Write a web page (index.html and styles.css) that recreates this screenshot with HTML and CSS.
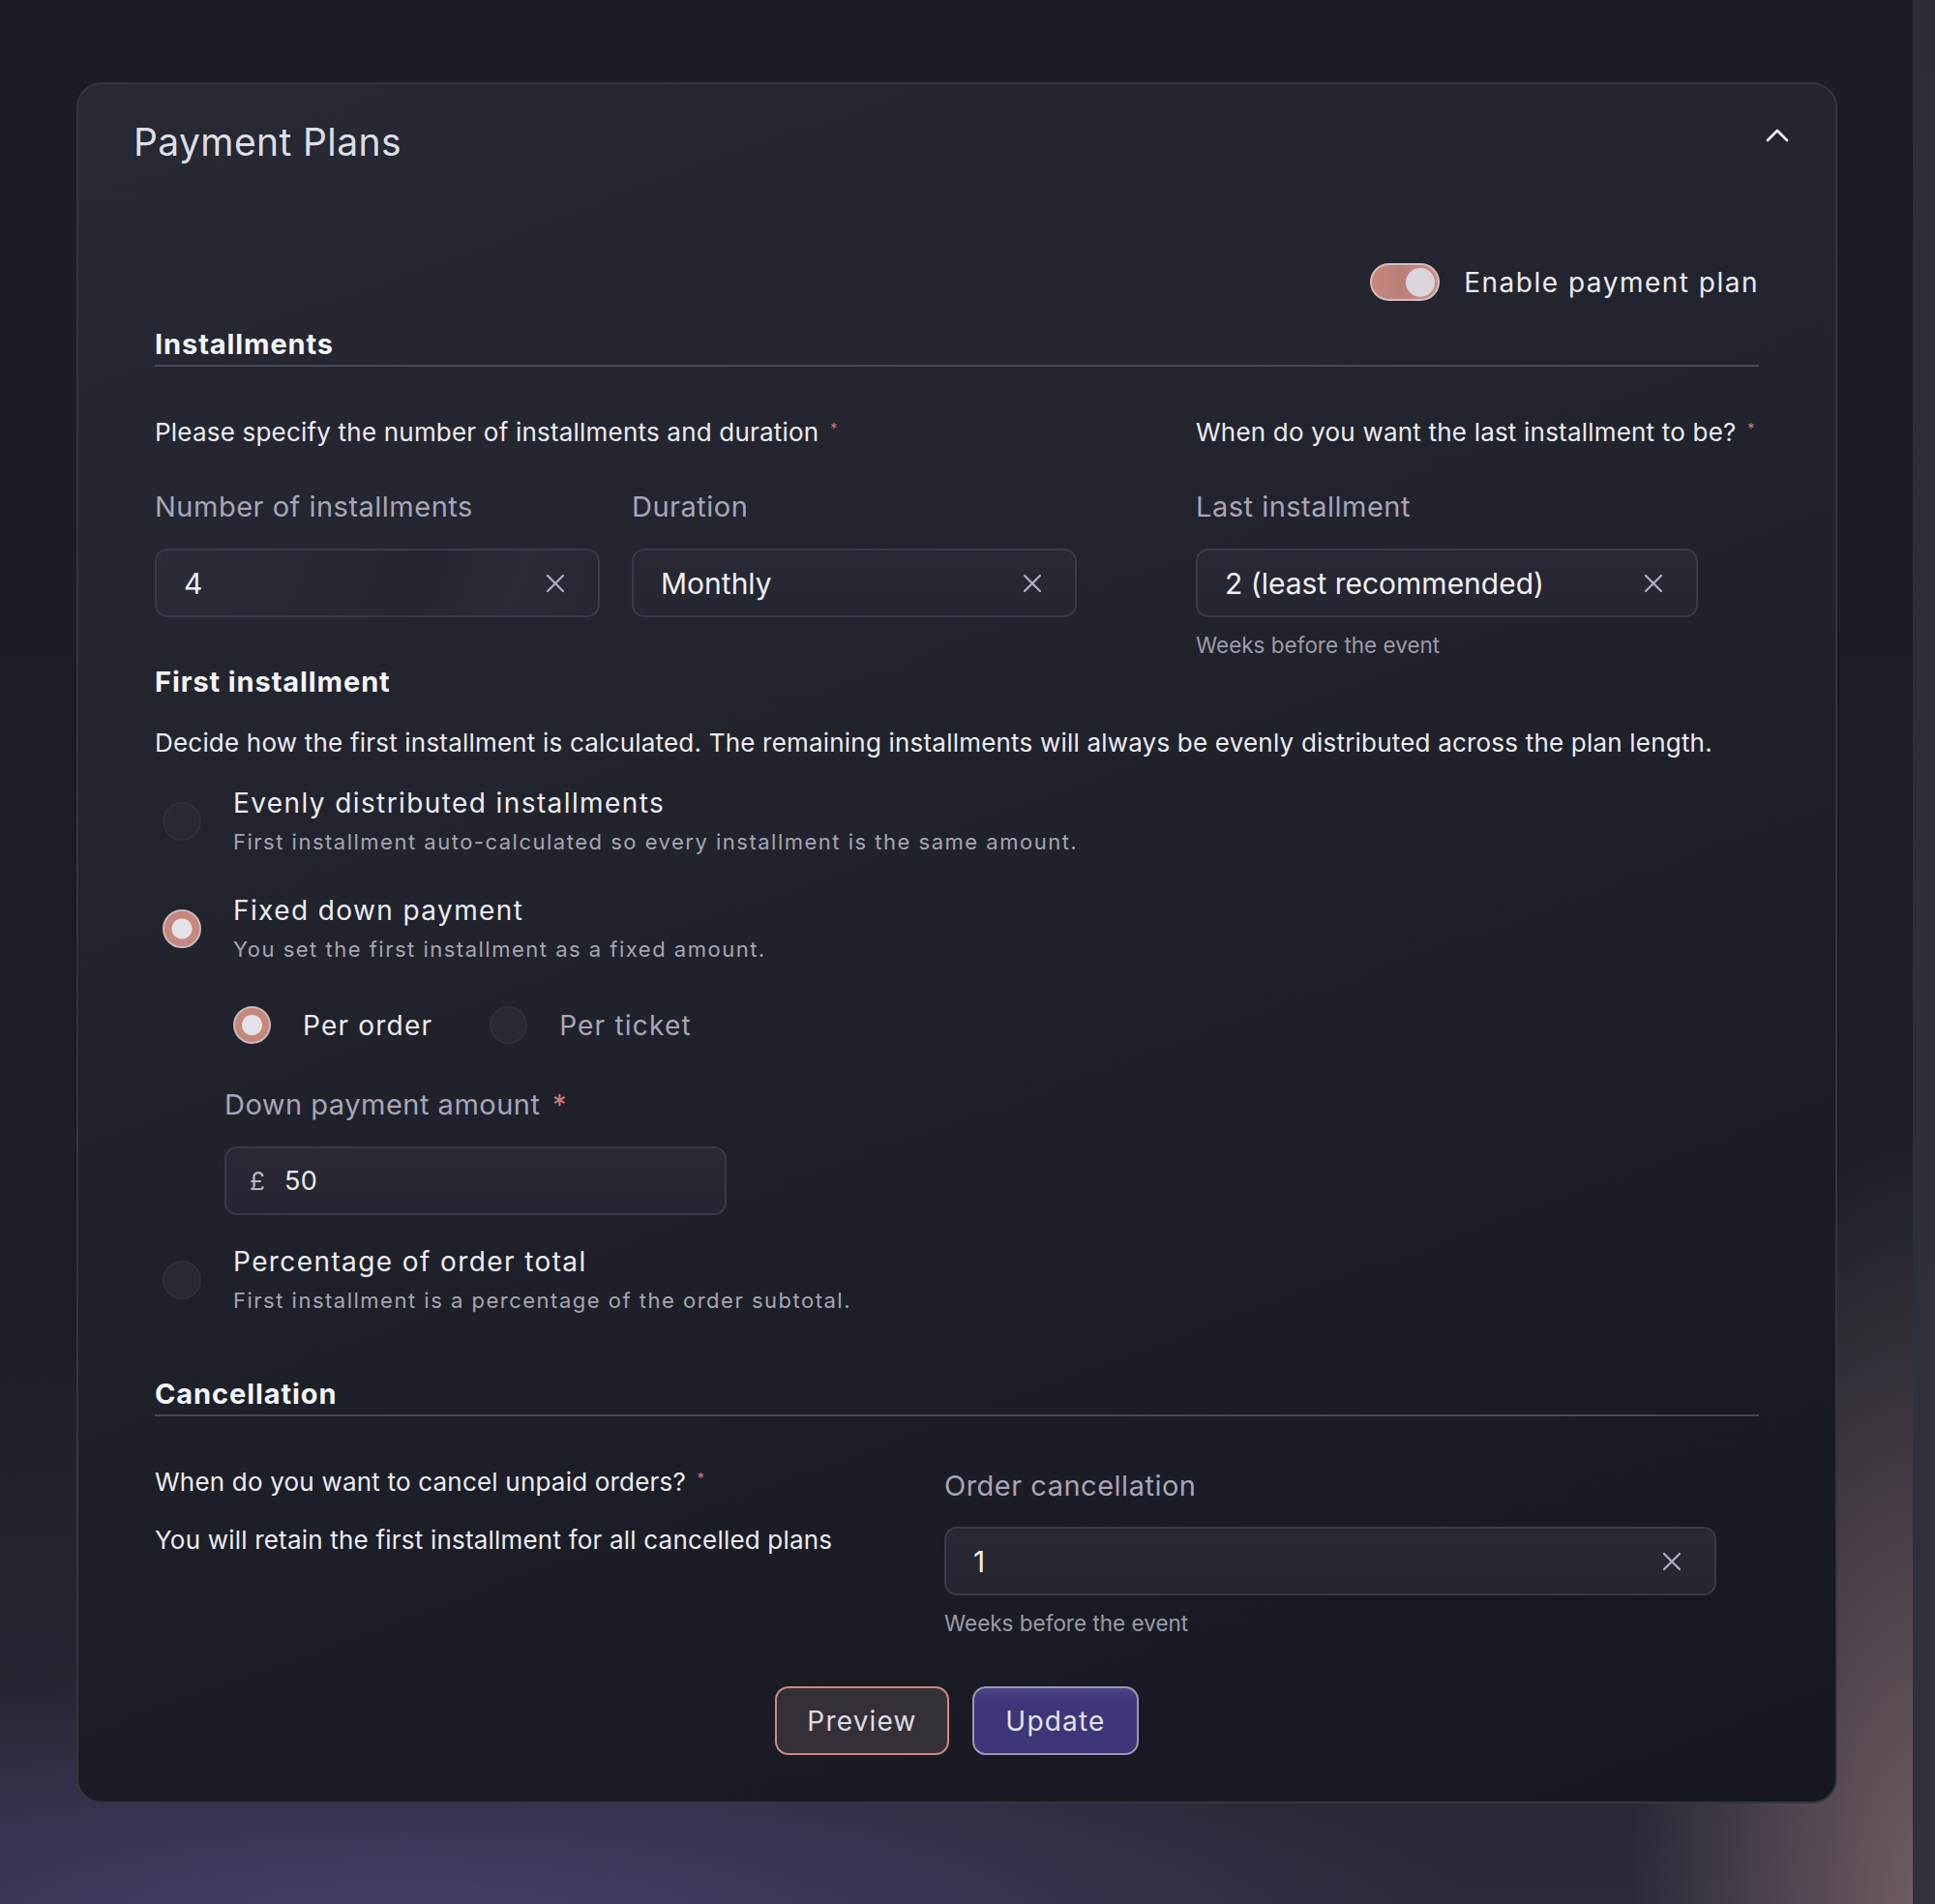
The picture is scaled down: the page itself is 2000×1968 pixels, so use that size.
FILE: index.html
```html
<!DOCTYPE html>
<html lang="en">
<head>
<meta charset="utf-8">
<title>Payment Plans</title>
<link rel="stylesheet" href="styles.css">
</head>
<body>
<div class="page">
  <main class="main">
    <section class="card">
      <header class="card-header">
        <h1 class="title">Payment Plans</h1>
        <button class="chevron" aria-label="Collapse">
          <svg width="24" height="14" viewBox="0 0 24 14"><polyline points="2,12 12,2 22,12" fill="none" stroke="#f2f2f5" stroke-width="2.6" stroke-linecap="round" stroke-linejoin="round"/></svg>
        </button>
      </header>

      <div class="card-body">
        <div class="toggle-row">
          <span class="toggle"><span class="knob"></span></span>
          <span class="toggle-label">Enable payment plan</span>
        </div>

        <h2 class="section-title">Installments</h2>

        <div class="inst-grid">
          <div class="inst-left">
            <p class="question q-first">Please specify the number of installments and duration <sup class="req">*</sup></p>
            <div class="field-pair">
              <div class="field">
                <label class="label">Number of installments</label>
                <div class="input input-textured"><span class="value">4</span><span class="clear"><svg width="20" height="20" viewBox="0 0 20 20"><path d="M2 2 L18 18 M18 2 L2 18" stroke="#b4b0c3" stroke-width="2.2" stroke-linecap="round"/></svg></span></div>
              </div>
              <div class="field">
                <label class="label">Duration</label>
                <div class="input"><span class="value">Monthly</span><span class="clear"><svg width="20" height="20" viewBox="0 0 20 20"><path d="M2 2 L18 18 M18 2 L2 18" stroke="#b4b0c3" stroke-width="2.2" stroke-linecap="round"/></svg></span></div>
              </div>
            </div>
          </div>
          <div class="inst-right">
            <p class="question q-first">When do you want the last installment to be? <sup class="req">*</sup></p>
            <div class="field">
              <label class="label">Last installment</label>
              <div class="input input-last"><span class="value">2 (least recommended)</span><span class="clear"><svg width="20" height="20" viewBox="0 0 20 20"><path d="M2 2 L18 18 M18 2 L2 18" stroke="#b4b0c3" stroke-width="2.2" stroke-linecap="round"/></svg></span></div>
              <p class="hint">Weeks before the event</p>
            </div>
          </div>
        </div>

        <h3 class="sub-title">First installment</h3>
        <p class="desc">Decide how the first installment is calculated. The remaining installments will always be evenly distributed across the plan length.</p>

        <div class="radio-option opt-first">
          <span class="radio"></span>
          <div class="radio-text">
            <div class="radio-label">Evenly distributed installments</div>
            <div class="radio-sub">First installment auto-calculated so every installment is the same amount.</div>
          </div>
        </div>

        <div class="radio-option opt-second">
          <span class="radio radio-on"></span>
          <div class="radio-text">
            <div class="radio-label">Fixed down payment</div>
            <div class="radio-sub">You set the first installment as a fixed amount.</div>
          </div>
        </div>

        <div class="nested">
          <div class="inline-radios">
            <div class="inline-radio">
              <span class="radio radio-sm radio-on"></span>
              <span class="inline-label">Per order</span>
            </div>
            <div class="inline-radio">
              <span class="radio radio-sm"></span>
              <span class="inline-label muted">Per ticket</span>
            </div>
          </div>
          <label class="label label-down">Down payment amount <span class="req-big">*</span></label>
          <div class="input input-amount"><span class="currency">£</span><span class="amount">50</span></div>
        </div>

        <div class="radio-option opt-third">
          <span class="radio"></span>
          <div class="radio-text">
            <div class="radio-label">Percentage of order total</div>
            <div class="radio-sub">First installment is a percentage of the order subtotal.</div>
          </div>
        </div>

        <h2 class="section-title section-cancel">Cancellation</h2>

        <div class="cancel-grid">
          <div class="cancel-left">
            <p class="question q-cancel">When do you want to cancel unpaid orders? <sup class="req">*</sup></p>
            <p class="question q-retain">You will retain the first installment for all cancelled plans</p>
          </div>
          <div class="cancel-right">
            <label class="label label-cancel">Order cancellation</label>
            <div class="input input-cancel"><span class="value">1</span><span class="clear"><svg width="20" height="20" viewBox="0 0 20 20"><path d="M2 2 L18 18 M18 2 L2 18" stroke="#b4b0c3" stroke-width="2.2" stroke-linecap="round"/></svg></span></div>
            <p class="hint">Weeks before the event</p>
          </div>
        </div>

        <div class="actions">
          <button class="btn btn-preview">Preview</button>
          <button class="btn btn-update">Update</button>
        </div>
      </div>
    </section>
  </main>
  <div class="scrollbar"></div>
</div>
</body>
</html>
```

FILE: styles.css
```css
* { box-sizing: border-box; }

html, body {
  margin: 0;
  padding: 0;
}

body {
  width: 2000px;
  height: 1968px;
  overflow: hidden;
  font-family: Inter, "Liberation Sans", Arial, sans-serif;
  color: #ececf0;
  background:
    radial-gradient(ellipse 300px 800px at 1985px 1968px, rgba(160, 124, 128, 0.6), rgba(160, 124, 128, 0) 100%),
    radial-gradient(ellipse 1100px 260px at 420px 1990px, rgba(78, 70, 120, 0.75), rgba(78, 70, 120, 0) 100%),
    linear-gradient(180deg, #1b1d25 0%, #1d1f28 70%, #2a2b3a 100%);
}

.page {
  display: flex;
  height: 1968px;
}

.main {
  flex: 1;
  padding: 85px 0 0 79px;
}

.scrollbar {
  width: 23px;
  background: linear-gradient(180deg, #2c2e36 0%, #30323b 100%);
}

.card {
  width: 1820px;
  height: 1779px;
  border: 2px solid #34363f;
  border-radius: 26px;
  background: linear-gradient(160deg, #272934 0%, #20222c 45%, #161821 100%);
}

.card-header {
  display: flex;
  justify-content: space-between;
  align-items: flex-start;
  padding: 37px 48px 0 57px;
}

.title {
  margin: 0;
  font-size: 39px;
  line-height: 46px;
  font-weight: 400;
  letter-spacing: 0.4px;
  color: #dedee4;
}

.chevron {
  border: 0;
  background: none;
  padding: 0;
  margin-top: 9px;
  width: 24px;
  height: 14px;
  display: block;
}
.chevron svg { display: block; }

.card-body {
  padding: 0 79px;
}

.toggle-row {
  margin-top: 102px;
  display: flex;
  justify-content: flex-end;
  align-items: center;
  gap: 25px;
  height: 39px;
}

.toggle {
  width: 72px;
  height: 39px;
  border-radius: 20px;
  border: 2px solid #d4bfc0;
  background: linear-gradient(90deg, #c6877e 0%, #b98078 45%, #cf8e84 100%);
  display: flex;
  justify-content: flex-end;
  align-items: center;
  padding: 0 3px;
}
.knob {
  width: 30px;
  height: 30px;
  border-radius: 50%;
  background: #d9d7dd;
}

.toggle-label {
  font-size: 28px;
  line-height: 34px;
  letter-spacing: 1.5px;
  color: #ececf0;
}

.section-title {
  margin: 29px 0 0;
  padding-bottom: 5px;
  font-size: 29px;
  line-height: 32px;
  font-weight: 700;
  letter-spacing: 0.9px;
  color: #f4f4f6;
  border-bottom: 2px solid #4a4a55;
}

.section-cancel {
  margin-top: 67px;
}

.inst-grid {
  display: grid;
  grid-template-columns: 955px 1fr;
  column-gap: 121px;
}

.question {
  margin: 51px 0 0;
  font-size: 26px;
  line-height: 30px;
  letter-spacing: 0.2px;
  color: #ececf0;
}

.q-first {
  margin-top: 53px;
}

.req {
  color: #c57a6c;
  font-size: 15px;
  vertical-align: top;
  position: relative;
  top: -4px;
  margin-left: 4px;
}

.field-pair {
  display: grid;
  grid-template-columns: 460px 460px;
  column-gap: 33px;
}

.label {
  display: block;
  margin-top: 45px;
  margin-bottom: 26px;
  font-size: 29px;
  line-height: 34px;
  letter-spacing: 0.5px;
  color: #a9a5b8;
}

.input {
  height: 71px;
  border: 2px solid #393a4b;
  border-radius: 13px;
  background: linear-gradient(180deg, #282935 0%, #252632 100%);
  display: flex;
  align-items: center;
  justify-content: space-between;
  padding: 0 34px 0 28px;
}

.input-textured {
  background: linear-gradient(110deg, #2a2b37 0%, #262633 60%, #2b2b38 80%, #262732 100%);
}

.input-last {
  width: 519px;
}

.value {
  font-size: 30px;
  line-height: 36px;
  color: #f0f0f3;
}

.clear {
  display: flex;
  width: 20px;
  height: 20px;
}

.hint {
  margin: 15px 0 0;
  font-size: 22.5px;
  line-height: 28px;
  color: #9d9ba7;
}

.sub-title {
  margin: 8px 0 0;
  font-size: 29px;
  line-height: 32px;
  font-weight: 700;
  letter-spacing: 0.9px;
  color: #f4f4f6;
}

.desc {
  margin: 32px 0 0;
  font-size: 26px;
  line-height: 30px;
  letter-spacing: 0.2px;
  color: #ececf0;
}

.radio-option {
  display: flex;
  align-items: center;
  gap: 33px;
  padding-left: 8px;
}
.opt-first { margin-top: 30px; }
.opt-second { margin-top: 40px; }
.opt-third { margin-top: 31px; }

.radio {
  flex: none;
  width: 40px;
  height: 40px;
  border-radius: 50%;
  background: #282935;
  border: 2px solid #2f303d;
}

.radio-on {
  background: radial-gradient(circle at 50% 50%, #e3e2e8 0, #e3e2e8 10px, #c8887e 11px, #c28478 100%);
  border: 2px solid #c9b8bb;
}

.radio-label {
  font-size: 28px;
  line-height: 34px;
  letter-spacing: 1.4px;
  color: #ececf0;
}

.radio-sub {
  margin-top: 9px;
  font-size: 22px;
  line-height: 28px;
  letter-spacing: 1.5px;
  color: #a7a5b0;
}

.nested {
  padding-left: 72px;
}

.inline-radios {
  margin-top: 45px;
  display: flex;
  align-items: center;
  gap: 59px;
  padding-left: 9px;
  height: 39px;
}

.inline-radio {
  display: flex;
  align-items: center;
  gap: 33px;
}

.radio-sm {
  width: 39px;
  height: 39px;
}

.inline-label {
  font-size: 28px;
  line-height: 34px;
  letter-spacing: 1.2px;
  color: #ececf0;
}
.inline-label.muted {
  color: #a9a7b5;
}

.label-down {
  margin-top: 46px;
}

.req-big {
  color: #d0806f;
  margin-left: 4px;
}

.input-amount {
  width: 519px;
  justify-content: flex-start;
  padding-left: 24px;
}

.currency {
  font-size: 26px;
  color: #b7b4c2;
  margin-right: 20px;
}

.amount {
  font-size: 27px;
  color: #ececf0;
  letter-spacing: 0.5px;
}

.cancel-grid {
  display: grid;
  grid-template-columns: 816px 1fr;
}

.q-cancel { margin-top: 53px; }
.q-retain { margin-top: 30px; }

.label-cancel {
  margin-top: 55px;
  margin-bottom: 25px;
}

.input-cancel {
  width: 798px;
}

.actions {
  margin-top: 51px;
  display: flex;
  justify-content: center;
  gap: 24px;
}

.btn {
  height: 71px;
  border-radius: 14px;
  font-family: Inter, "Liberation Sans", Arial, sans-serif;
  font-size: 28px;
  letter-spacing: 1.2px;
  color: #dedde4;
  padding: 0;
}

.btn-preview {
  width: 180px;
  background: #352f38;
  border: 2px solid #cf8a7f;
}

.btn-update {
  width: 172px;
  background: linear-gradient(180deg, #4a4584 0%, #3d3679 20%, #3c3577 100%);
  border: 2px solid #9c9ab1;
  color: #e2e2ea;
}
```
